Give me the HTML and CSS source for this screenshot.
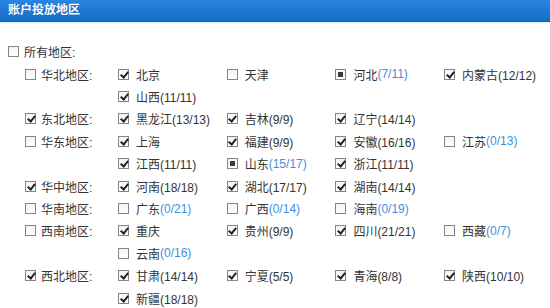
FILE: index.html
```html
<!DOCTYPE html>
<html lang="zh-CN">
<head>
<meta charset="utf-8">
<title>账户投放地区</title>
<link rel="stylesheet" href="styles.css">
</head>
<body>
<div class="panel">
  <div class="header">账户投放地区</div>
  <div class="header-shade"></div>
  <div class="content">
    <div class="all-row"><span class="cb"></span><span class="lbl">所有地区:</span></div>

    <div class="region">
      <div class="region-label"><span class="cb"></span><span class="lbl">华北地区:</span></div>
      <div class="items">
        <div class="item"><span class="cb on"></span>北京</div>
        <div class="item"><span class="cb"></span>天津</div>
        <div class="item"><span class="cb part"></span>河北<span class="cnt-b">(7/11)</span></div>
        <div class="item"><span class="cb on"></span>内蒙古(12/12)</div>
        <div class="item"><span class="cb on"></span>山西(11/11)</div>
      </div>
    </div>

    <div class="region">
      <div class="region-label"><span class="cb on"></span><span class="lbl">东北地区:</span></div>
      <div class="items">
        <div class="item"><span class="cb on"></span>黑龙江(13/13)</div>
        <div class="item"><span class="cb on"></span>吉林(9/9)</div>
        <div class="item"><span class="cb on"></span>辽宁(14/14)</div>
      </div>
    </div>

    <div class="region">
      <div class="region-label"><span class="cb"></span><span class="lbl">华东地区:</span></div>
      <div class="items">
        <div class="item"><span class="cb on"></span>上海</div>
        <div class="item"><span class="cb on"></span>福建(9/9)</div>
        <div class="item"><span class="cb on"></span>安徽(16/16)</div>
        <div class="item"><span class="cb"></span>江苏<span class="cnt-b">(0/13)</span></div>
        <div class="item"><span class="cb on"></span>江西(11/11)</div>
        <div class="item"><span class="cb part"></span>山东<span class="cnt-b">(15/17)</span></div>
        <div class="item"><span class="cb on"></span>浙江(11/11)</div>
      </div>
    </div>

    <div class="region">
      <div class="region-label"><span class="cb on"></span><span class="lbl">华中地区:</span></div>
      <div class="items">
        <div class="item"><span class="cb on"></span>河南(18/18)</div>
        <div class="item"><span class="cb on"></span>湖北(17/17)</div>
        <div class="item"><span class="cb on"></span>湖南(14/14)</div>
      </div>
    </div>

    <div class="region">
      <div class="region-label"><span class="cb"></span><span class="lbl">华南地区:</span></div>
      <div class="items">
        <div class="item"><span class="cb"></span>广东<span class="cnt-b">(0/21)</span></div>
        <div class="item"><span class="cb"></span>广西<span class="cnt-b">(0/14)</span></div>
        <div class="item"><span class="cb"></span>海南<span class="cnt-b">(0/19)</span></div>
      </div>
    </div>

    <div class="region">
      <div class="region-label"><span class="cb"></span><span class="lbl">西南地区:</span></div>
      <div class="items">
        <div class="item"><span class="cb on"></span>重庆</div>
        <div class="item"><span class="cb on"></span>贵州(9/9)</div>
        <div class="item"><span class="cb on"></span>四川(21/21)</div>
        <div class="item"><span class="cb"></span>西藏<span class="cnt-b">(0/7)</span></div>
        <div class="item"><span class="cb"></span>云南<span class="cnt-b">(0/16)</span></div>
      </div>
    </div>

    <div class="region">
      <div class="region-label"><span class="cb on"></span><span class="lbl">西北地区:</span></div>
      <div class="items">
        <div class="item"><span class="cb on"></span>甘肃(14/14)</div>
        <div class="item"><span class="cb on"></span>宁夏(5/5)</div>
        <div class="item"><span class="cb on"></span>青海(8/8)</div>
        <div class="item"><span class="cb on"></span>陕西(10/10)</div>
        <div class="item"><span class="cb on"></span>新疆(18/18)</div>
      </div>
    </div>
  </div>
</div>
</body>
</html>
```

FILE: styles.css
```css
html, body {
  margin: 0;
  padding: 0;
  background: #ffffff;
}

body {
  font-family: "Liberation Sans", "Noto Sans CJK SC", sans-serif;
  font-size: 12px;
  color: #333333;
}

.panel {
  width: 550px;
  height: 308px;
  overflow: hidden;
}

.header {
  height: 21px;
  line-height: 21px;
  padding-left: 8px;
  color: #ffffff;
  font-weight: bold;
  font-size: 12px;
  background: linear-gradient(to bottom, #2a86e2 0%, #1f78d6 50%, #1a6cc2 100%);
  border-bottom: 1px solid #1660aa;
  text-shadow: 0 0 1px rgba(0, 40, 100, 0.4);
}

.header-shade {
  height: 4px;
  background: linear-gradient(to bottom, #d4f1fb 0%, #f3fbfe 50%, #ffffff 100%);
}

.content {
  padding-top: 14px;
}

.all-row {
  display: flex;
  align-items: center;
  height: 22px;
  padding-left: 8px;
  margin-bottom: 1px;
}

.all-row .lbl {
  margin-left: 5px;
}

.region {
  display: flex;
  padding-left: 25px;
}

.region-label {
  width: 93px;
  flex: 0 0 93px;
  height: 22.4px;
  display: flex;
  align-items: center;
}

.region-label .lbl {
  margin-left: 5px;
}

.items {
  display: grid;
  grid-template-columns: repeat(4, 108.7px);
  grid-auto-rows: 22.4px;
}

.item {
  display: flex;
  align-items: center;
  white-space: nowrap;
}

.item .cb {
  margin-right: 7px;
}

.cnt-b {
  color: #3d8fdc;
}

.cb {
  position: relative;
  display: inline-block;
  box-sizing: border-box;
  width: 11px;
  height: 11px;
  flex: 0 0 11px;
  border: 1px solid #858585;
  background: linear-gradient(to bottom, #f4f4f4, #ffffff);
}

.cb.on::after {
  content: "";
  position: absolute;
  left: 2.5px;
  top: 0px;
  width: 3px;
  height: 6px;
  border-right: 2px solid #222222;
  border-bottom: 2px solid #222222;
  transform: rotate(40deg);
}

.cb.part::after {
  content: "";
  position: absolute;
  left: 2px;
  top: 2px;
  width: 5px;
  height: 5px;
  background: #3a3a3a;
}
```
